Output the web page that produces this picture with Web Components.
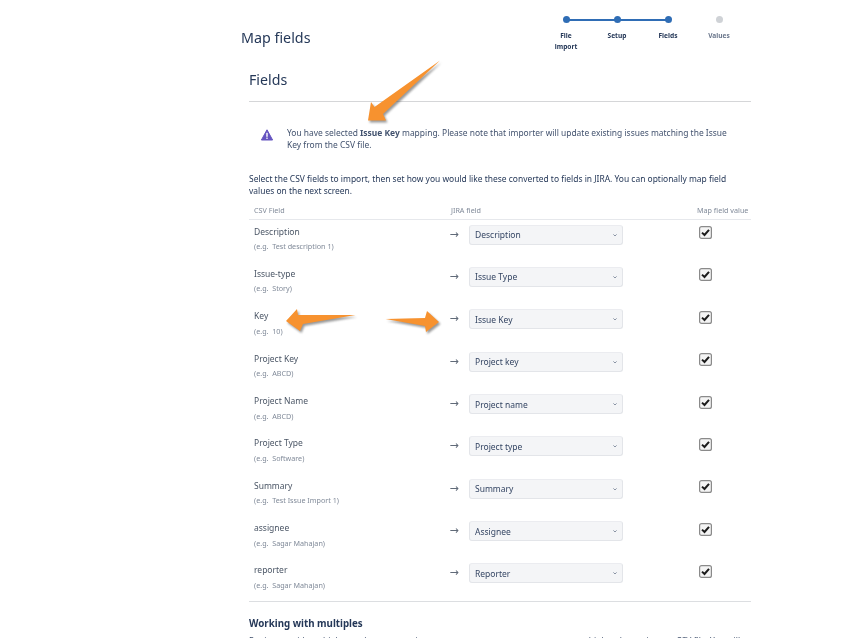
<!DOCTYPE html>
<html><head><meta charset="utf-8"><style>
html,body{margin:0;padding:0;height:638px;overflow:hidden;background:#fff}
body{font-family:"Noto Sans","Open Sans",sans-serif;color:#172b4d}
</style></head><body>
<import-page></import-page>
<script>
const ORANGE='#f7922f';
class ImportStepper extends HTMLElement{constructor(){super();const s=this.attachShadow({mode:'open'});
const steps=[['File<br>import',1],['Setup',1],['Fields',1],['Values',0]];
s.innerHTML=`<style>
:host{display:flex;width:204px;height:40px;margin-right:6.5px;position:relative;font:700 6.6px/11px "Noto Sans",sans-serif;color:#253858;padding-top:0}
.st{width:51px;display:flex;flex-direction:column;align-items:center;text-align:center;position:relative}
.d{width:7px;height:7px;border-radius:50%;background:#2f6db5;margin-bottom:7px;position:relative;z-index:1}
.st:not(.on) .d{background:#cfd2d6}.st:not(.on){color:#6b778c}
.st.l::after{content:"";position:absolute;left:25.5px;top:2.5px;width:51px;height:2px;background:#2f6db5}
</style>${steps.map((x,i)=>`<div class="st ${x[1]?'on':''} ${i<2?'l':''}"><span class="d"></span><span>${x[0]}</span></div>`).join('')}`}}
customElements.define('import-stepper',ImportStepper);

class WarnMsg extends HTMLElement{constructor(){super();this.attachShadow({mode:'open'}).innerHTML=`<style>
:host{display:flex;gap:14px;padding:0 20px 0 12px;font-size:8.45px;line-height:12.4px;color:#42526e}
svg{flex:none;width:12px;height:12px;margin-top:2px}
</style><svg viewBox="0 0 12 12"><path d="M6 .8 11.6 11H.4z" fill="#6554c0" stroke="#6554c0" stroke-linejoin="round"/><rect x="5.3" y="3.8" width="1.4" height="4" fill="#fff"/><rect x="5.3" y="8.6" width="1.4" height="1.3" fill="#fff"/></svg><div><slot></slot></div>`}}
customElements.define('warn-msg',WarnMsg);

class FieldRow extends HTMLElement{constructor(){super();this.attachShadow({mode:'open'})}
connectedCallback(){const a=n=>this.getAttribute(n);this.shadowRoot.innerHTML=`<style>
:host{display:grid;grid-template-columns:191px 29px 154px 1fr;height:42.35px;box-sizing:border-box;font-size:8.5px;color:#4a5565}
.n{padding:6px 0 0 5px;line-height:12.5px}
.e{font-size:7.2px;color:#808a99;line-height:11px;margin-top:3px}
.ar{padding:7px 0 0 9.5px;font-size:11px;line-height:16px;color:#606a78;font-family:"DejaVu Sans",sans-serif}
.sel{box-sizing:border-box;height:20px;margin-top:5px;background:#f4f5f7;border:1px solid #e3e5e9;border-top-color:#ebecf0;border-radius:3px;display:flex;align-items:center;justify-content:space-between;padding:0 3px 0 5px;color:#344563;font-size:8.5px}
.sel svg{width:8px;height:8px}
.cb{display:flex;justify-content:center;padding-top:6.5px;padding-left:36px}
.cb svg{width:13px;height:13px}
</style><div class="n">${a('name')}<div class="e">(e.g.&nbsp; ${a('eg')})</div></div>
<div class="ar">→</div>
<div class="sel"><span>${a('map')}</span><svg viewBox="0 0 8 8"><path d="M2.4 3.4 4 5l1.6-1.6" fill="none" stroke="#8993a4" stroke-width="1"/></svg></div>
<div class="cb"><svg viewBox="0 0 13 13"><rect x=".6" y=".6" width="11.8" height="11.8" rx="2" fill="#f4f4f4" stroke="#8a8a8a" stroke-width="1.2"/><path d="M3 6.6 5.5 9 10 3.8" fill="none" stroke="#1c1c1c" stroke-width="2"/></svg></div>`}}
customElements.define('field-row',FieldRow);

class OrangeArrow extends HTMLElement{constructor(){super();this.attachShadow({mode:'open'})}
connectedCallback(){const a=n=>this.getAttribute(n);this.shadowRoot.innerHTML=`<style>
:host{position:absolute;left:${a('x')}px;top:${a('y')}px;width:${a('w')}px;height:${a('h')}px;display:block}
svg{width:100%;height:100%;overflow:visible}
</style><svg viewBox="0 0 ${a('w')} ${a('h')}"><path d="${a('d')}" fill="#444" opacity=".55" transform="translate(1.5 2)" style="filter:blur(1px)"/><path d="${a('d')}" fill="${ORANGE}"/></svg>`}}
customElements.define('orange-arrow',OrangeArrow);

class ImportPage extends HTMLElement{constructor(){super();const rows=[
['Description','Test description 1','Description'],['Issue-type','Story','Issue Type'],['Key','10','Issue Key'],['Project Key','ABCD','Project key'],['Project Name','ABCD','Project name'],['Project Type','Software','Project type'],['Summary','Test Issue Import 1','Summary'],['assignee','Sagar Mahajan','Assignee'],['reporter','Sagar Mahajan','Reporter']];
this.attachShadow({mode:'open'}).innerHTML=`<style>
:host{display:block;position:relative;height:638px;overflow:hidden;filter:blur(.25px)}
.wrap{width:510px;margin-left:241px;padding-top:16px}
.head{display:flex;justify-content:space-between;height:54px}
h1{margin:12px 0 0;font-size:14.3px;font-weight:400;line-height:20px;color:#253858}
.in{margin-left:8px;width:502px}
h2{margin:0;font-size:14.2px;font-weight:400;line-height:20px;color:#253858;padding-bottom:11px;border-bottom:1px solid #d5d6d8}
warn-msg{margin-top:25px}
.p{margin:21px 0 0;font-size:8.45px;line-height:12.4px;color:#253858}
.th{display:grid;grid-template-columns:197px 246px 1fr;margin-top:5px;font-size:7.2px;line-height:11px;color:#808a99;padding:2px 0 3px 5px;border-bottom:1px solid #e6e8ec;white-space:nowrap}
.rows{border-bottom:1px solid #dcdee1}
h3{margin:15px 0 0;font-size:9.75px;font-weight:700;line-height:13px;color:#253858}
.p2{margin:5px 0 0;font-size:8.45px;line-height:12px;color:#42526e;white-space:nowrap}
</style>
<div class="wrap"><div class="head"><h1>Map fields</h1><import-stepper></import-stepper></div>
<div class="in"><h2>Fields</h2>
<warn-msg>You have selected <b>Issue Key</b> mapping. Please note that importer will update existing issues matching the Issue Key from the CSV file.</warn-msg>
<p class="p">Select the CSV fields to import, then set how you would like these converted to fields in JIRA. You can optionally map field values on the next screen.</p>
<div class="th"><span>CSV Field</span><span>JIRA field</span><span>Map field value</span></div>
<div class="rows">${rows.map(r=>`<field-row name="${r[0]}" eg="${r[1]}" map="${r[2]}"></field-row>`).join('')}</div>
<h3>Working with multiples</h3>
<p class="p2">For issues with multiple attachments, versions or components, ensure you map to multiple columns in your CSV file. You will</p>
</div></div>
<orange-arrow x="366" y="60" w="76" h="63" d="M74 .5 17 54 20 60.5 2 60.5 5 42 8.5 47Z"></orange-arrow>
<orange-arrow x="286" y="308" w="71" h="24" d="M69.5 7 17 16 14 23 0 13 11 1 12 7Z"></orange-arrow>
<orange-arrow x="385" y="310" w="55" h="24" d="M.5 9 40 8 42 1 54 12 41 22 40 16Z"></orange-arrow>
`}}
customElements.define('import-page',ImportPage);
</script></body></html>
